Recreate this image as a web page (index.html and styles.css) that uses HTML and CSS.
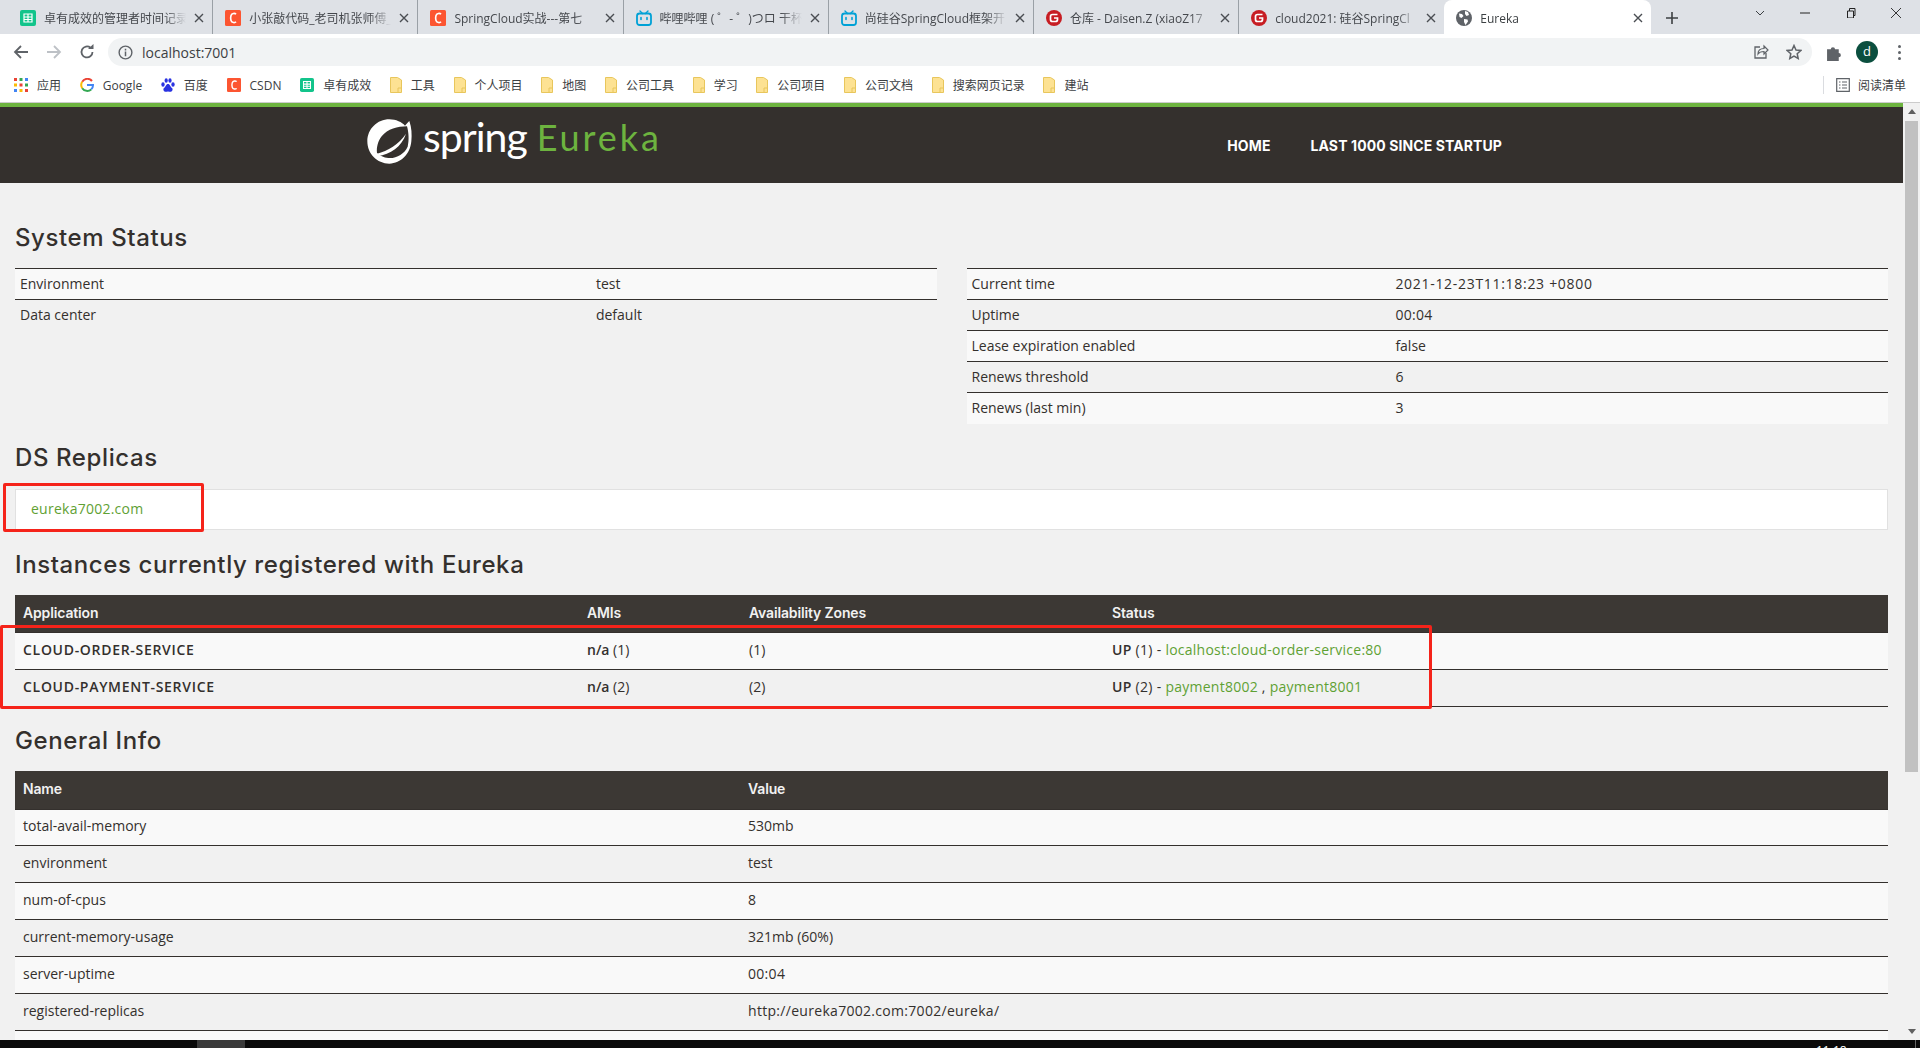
FILE: index.html
```html
<!DOCTYPE html>
<html lang="en">
<head>
  <meta charset="UTF-8" />
  <meta name="viewport" content="width=device-width, initial-scale=1" />
  <title>Eureka</title>
  <link rel="stylesheet" href="styles.css">
</head>
<body>
  <svg class="icon-defs" width="0" height="0">
    <symbol id="ic-sheet" viewBox="0 0 16 16">
      <rect width="16" height="16" rx="2" fill="#12c48b"/>
      <path d="M4 4h8v8H4zM4 7h8M4 9.500h8M8 4v8" fill="none" stroke="#fff" stroke-width="1.200"/>
    </symbol>
    <symbol id="ic-csdn" viewBox="0 0 16 16">
      <rect width="16" height="16" rx="1.500" fill="#fc5531"/>
      <path d="M11 4.200C10 3 6.800 2.900 6 5.500c-.5 1.700-.5 3.400 0 5 .8 2.600 4 2.500 5 1.300" fill="none" stroke="#fff" stroke-width="1.600"/>
    </symbol>
    <symbol id="ic-bili" viewBox="0 0 16 16">
      <path d="M4 1l2.500 2.500M12 1L9.500 3.500" stroke="#00a1d6" stroke-width="1.400" stroke-linecap="round"/>
      <rect x="1" y="3.500" width="14" height="11.500" rx="2.500" fill="none" stroke="#00a1d6" stroke-width="1.800"/>
      <path d="M5 7.500v2M11 7.500v2" stroke="#00a1d6" stroke-width="1.600" stroke-linecap="round"/>
    </symbol>
    <symbol id="ic-gitee" viewBox="0 0 16 16">
      <circle cx="8" cy="8" r="8" fill="#c71d23"/>
      <path d="M11.500 4.500H6.500a2 2 0 0 0-2 2v3a2 2 0 0 0 2 2h3a2 2 0 0 0 2-2V8H8" fill="none" stroke="#fff" stroke-width="1.700"/>
    </symbol>
    <symbol id="ic-globe" viewBox="0 0 16 16">
      <circle cx="8" cy="8" r="8" fill="#5f6368"/>
      <path d="M3 3.500l3 .5 1.500 2L5.500 8 3.500 7zM9 1l3 1 1 3-2.500 1L9 4zM8 9l3.500.5.5 2L9.500 15 8 12z" fill="#fff"/>
    </symbol>
    <symbol id="ic-folder" viewBox="0 0 12 16">
      <path d="M.5.500h7l4 2.500v12.500H.5z" fill="#fde293" stroke="#e8c65c"/>
      <path d="M8 15V11h3.500" fill="none" stroke="#e8c65c"/>
    </symbol>
    <symbol id="ic-close" viewBox="0 0 10 10">
      <path d="M1 1l8 8M9 1L1 9" stroke="#4a4d52" stroke-width="1.400" fill="none"/>
    </symbol>
  </svg>

  <!-- browser chrome -->
  <div class="tabstrip">
    <div class="tab"><svg class="favicon"><use href="#ic-sheet"/></svg><span class="tab-title">卓有成效的管理者时间记录</span><svg class="tab-close"><use href="#ic-close"/></svg></div>
    <div class="tab"><svg class="favicon"><use href="#ic-csdn"/></svg><span class="tab-title">小张敲代码_老司机张师傅_</span><svg class="tab-close"><use href="#ic-close"/></svg></div>
    <div class="tab"><svg class="favicon"><use href="#ic-csdn"/></svg><span class="tab-title">SpringCloud实战---第七</span><svg class="tab-close"><use href="#ic-close"/></svg></div>
    <div class="tab"><svg class="favicon"><use href="#ic-bili"/></svg><span class="tab-title">哔哩哔哩 ( ゜- ゜)つロ 干杯</span><svg class="tab-close"><use href="#ic-close"/></svg></div>
    <div class="tab"><svg class="favicon"><use href="#ic-bili"/></svg><span class="tab-title">尚硅谷SpringCloud框架开</span><svg class="tab-close"><use href="#ic-close"/></svg></div>
    <div class="tab"><svg class="favicon"><use href="#ic-gitee"/></svg><span class="tab-title">仓库 - Daisen.Z (xiaoZ17</span><svg class="tab-close"><use href="#ic-close"/></svg></div>
    <div class="tab tab-nosep"><svg class="favicon"><use href="#ic-gitee"/></svg><span class="tab-title">cloud2021: 硅谷SpringCl</span><svg class="tab-close"><use href="#ic-close"/></svg></div>
    <div class="tab tab-active"><svg class="favicon"><use href="#ic-globe"/></svg><span class="tab-title">Eureka</span><svg class="tab-close"><use href="#ic-close"/></svg></div>
    <svg class="new-tab" viewBox="0 0 12 12"><path d="M6 0v12M0 6h12" stroke="#3c4043" stroke-width="1.600"/></svg>
    <div class="win-controls">
      <svg viewBox="0 0 10 10"><path d="M1 3l4 4 4-4" fill="none" stroke="#3c4043"/></svg>
      <svg viewBox="0 0 10 10"><path d="M0 5h10" stroke="#222"/></svg>
      <svg viewBox="0 0 10 10"><path d="M1.500 3h6v7h-6zM3.500 3V.5h5.500v7H7.500" fill="none" stroke="#222"/></svg>
      <svg viewBox="0 0 10 10"><path d="M0 0l10 10M10 0L0 10" stroke="#222" stroke-width=".9"/></svg>
    </div>
  </div>

  <div class="toolbar">
    <svg class="tool-btn" viewBox="0 0 16 16"><path d="M15 8H2M8 2L2 8l6 6" fill="none" stroke="#5f6368" stroke-width="1.800"/></svg>
    <svg class="tool-btn" viewBox="0 0 16 16"><path d="M1 8h13M8 2l6 6-6 6" fill="none" stroke="#bdc1c6" stroke-width="1.800"/></svg>
    <svg class="tool-btn" viewBox="0 0 16 16"><path d="M13.500 8A5.500 5.500 0 1 1 11.500 3.700" fill="none" stroke="#5f6368" stroke-width="1.800"/><path d="M9 5h5.500V0z" fill="#5f6368"/></svg>
    <div class="omnibox">
      <svg class="omni-info" viewBox="0 0 16 16"><circle cx="8" cy="8" r="6.800" fill="none" stroke="#5f6368" stroke-width="1.500"/><path d="M8 7v5M8 4v1.800" stroke="#5f6368" stroke-width="1.600"/></svg>
      <span class="omni-url">localhost:7001</span>
      <svg class="omni-share" viewBox="0 0 16 16"><path d="M7 3H2v11h11V9" fill="none" stroke="#5f6368" stroke-width="1.300"/><path d="M5 10c0-4 3-5.500 6-5.500V2l4 4-4 4V7.500c-3 0-5 1-6 2.500z" fill="none" stroke="#5f6368" stroke-width="1.200"/></svg>
      <svg class="omni-star" viewBox="0 0 16 16"><path d="M8 1.500l2 4.500 4.800.5-3.600 3.200 1 4.800L8 12.100 3.800 14.500l1-4.800L1.200 6.500 6 6z" fill="none" stroke="#5f6368" stroke-width="1.500"/></svg>
    </div>
    <svg class="ext-btn" viewBox="0 0 16 16"><path d="M1 5h3.500a2 2 0 1 1 4 0H12v3.500a2 2 0 1 1 0 4V16H1z" fill="#5f6368"/></svg>
    <span class="avatar">d</span>
    <span class="menu-dots"><i></i><i></i><i></i></span>
  </div>

  <div class="bookmarks">
    <span class="bm bm-apps">
      <svg class="bm-icon" viewBox="0 0 14 14"><g>
        <rect width="3" height="3" fill="#ea4335"/><rect x="5.500" width="3" height="3" fill="#34a853"/><rect x="11" width="3" height="3" fill="#4285f4"/>
        <rect y="5.500" width="3" height="3" fill="#fbbc05"/><rect x="5.500" y="5.500" width="3" height="3" fill="#ea4335"/><rect x="11" y="5.500" width="3" height="3" fill="#34a853"/>
        <rect y="11" width="3" height="3" fill="#4285f4"/><rect x="5.500" y="11" width="3" height="3" fill="#fbbc05"/><rect x="11" y="11" width="3" height="3" fill="#ea4335"/>
      </g></svg>应用</span>
    <span class="bm">
      <svg class="bm-icon" viewBox="0 0 14 14"><path d="M12 3A6 6 0 0 0 2.200 3.800" fill="none" stroke="#ea4335" stroke-width="2"/><path d="M2.200 3.800a6 6 0 0 0 0 6.400" fill="none" stroke="#fbbc05" stroke-width="2"/><path d="M2.200 10.200a6 6 0 0 0 9 1.200" fill="none" stroke="#34a853" stroke-width="2"/><path d="M11.200 11.400A6 6 0 0 0 13 7H7" fill="none" stroke="#4285f4" stroke-width="2"/></svg>Google</span>
    <span class="bm">
      <svg class="bm-icon" viewBox="0 0 14 14"><g fill="#2932e1"><ellipse cx="2" cy="6.500" rx="1.700" ry="2.300"/><ellipse cx="5.200" cy="2.500" rx="1.600" ry="2.300"/><ellipse cx="9" cy="2.500" rx="1.600" ry="2.300"/><ellipse cx="12" cy="6.500" rx="1.700" ry="2.300"/><path d="M7 6c-2 0-2 2.500-4 4-1.500 1.500 0 4 2 3.800 1 0 1.500-.3 2-.3s1 .3 2 .3c2 .2 3.500-2.300 2-3.800C9 8.500 9 6 7 6z"/></g></svg>百度</span>
    <span class="bm"><svg class="bm-icon"><use href="#ic-csdn"/></svg>CSDN</span>
    <span class="bm"><svg class="bm-icon"><use href="#ic-sheet"/></svg>卓有成效</span>
    <span class="bm"><svg class="bm-folder"><use href="#ic-folder"/></svg>工具</span>
    <span class="bm"><svg class="bm-folder"><use href="#ic-folder"/></svg>个人项目</span>
    <span class="bm"><svg class="bm-folder"><use href="#ic-folder"/></svg>地图</span>
    <span class="bm"><svg class="bm-folder"><use href="#ic-folder"/></svg>公司工具</span>
    <span class="bm"><svg class="bm-folder"><use href="#ic-folder"/></svg>学习</span>
    <span class="bm"><svg class="bm-folder"><use href="#ic-folder"/></svg>公司项目</span>
    <span class="bm"><svg class="bm-folder"><use href="#ic-folder"/></svg>公司文档</span>
    <span class="bm"><svg class="bm-folder"><use href="#ic-folder"/></svg>搜索网页记录</span>
    <span class="bm"><svg class="bm-folder"><use href="#ic-folder"/></svg>建站</span>
    <span class="reading-list">
      <svg class="bm-icon" viewBox="0 0 14 14"><path d="M.7.700h12.600v12.600H.7zM3 4h1.500M6 4h5M3 7h1.500M6 7h5M3 10h1.500M6 10h5" fill="none" stroke="#5f6368" stroke-width="1.200"/></svg>阅读清单</span>
  </div>

  <!-- page -->
  <div class="viewport">
    <main class="page">
      <nav class="navbar">
        <div class="brand">
          <svg class="spring-logo" viewBox="0 0 135 135">
            <path d="M127 6c7 20 8 40 6 61-3 38-31 66-66 67C30 134 1 104 1 67 1 30 31 1 67 1c20 0 38 9 47 19 4-4 9-10 13-14z" fill="#fff"/>
            <path d="M120 22c-28 0-58 8-76 30-11 14-16 33-14 50 8 8 20 14 34 15 24 2 48-12 58-34 5-20 3-43-2-61z" fill="#34302d"/>
            <path d="M117 44C96 76 62 96 30 104l2 7c38-4 72-28 85-67z" fill="#fff"/>
          </svg>
          <span class="brand-spring">spring</span>
          <span class="brand-eureka">Eureka</span>
        </div>
        <ul class="nav-links">
          <li>Home</li>
          <li>Last 1000 since startup</li>
        </ul>
      </nav>

      <section class="section section-first">
        <h2>System Status</h2>
        <div class="status-grid">
          <table class="kv-table kv-left">
            <tr><td>Environment</td><td>test</td></tr>
            <tr><td>Data center</td><td>default</td></tr>
          </table>
          <table class="kv-table kv-right">
            <tr><td>Current time</td><td class="num-wide">2021-12-23T11:18:23 +0800</td></tr>
            <tr><td>Uptime</td><td class="num">00:04</td></tr>
            <tr><td>Lease expiration enabled</td><td>false</td></tr>
            <tr><td>Renews threshold</td><td>6</td></tr>
            <tr><td>Renews (last min)</td><td>3</td></tr>
          </table>
        </div>
      </section>

      <section class="section section-replicas">
        <h2>DS Replicas</h2>
        <div class="replicas"><a href="#">eureka7002.com</a></div>
      </section>

      <section class="section section-instances">
        <h2>Instances currently registered with Eureka</h2>
        <table class="data-table instances">
          <thead>
            <tr><th>Application</th><th>AMIs</th><th>Availability Zones</th><th>Status</th></tr>
          </thead>
          <tbody>
            <tr><td><b class="app-name">CLOUD-ORDER-SERVICE</b></td><td><b>n/a</b> (1)</td><td>(1)</td><td class="status-cell"><b>UP</b> (1) - <a href="#">localhost:cloud-order-service:80</a></td></tr>
            <tr><td><b class="app-name">CLOUD-PAYMENT-SERVICE</b></td><td><b>n/a</b> (2)</td><td>(2)</td><td class="status-cell"><b>UP</b> (2) - <a href="#">payment8002</a> , <a href="#">payment8001</a></td></tr>
          </tbody>
        </table>
      </section>

      <section class="section">
        <h2>General Info</h2>
        <table class="data-table general">
          <thead>
            <tr><th>Name</th><th>Value</th></tr>
          </thead>
          <tbody>
            <tr><td>total-avail-memory</td><td>530mb</td></tr>
            <tr><td>environment</td><td>test</td></tr>
            <tr><td>num-of-cpus</td><td>8</td></tr>
            <tr><td>current-memory-usage</td><td>321mb (60%)</td></tr>
            <tr><td>server-uptime</td><td class="num">00:04</td></tr>
            <tr><td>registered-replicas</td><td class="num">http://eureka7002.com:7002/eureka/</td></tr>
            <tr><td>unavailable-replicas</td><td></td></tr>
          </tbody>
        </table>
      </section>

      <!-- red marks drawn on top of the screenshot -->
      <div class="mark mark-replica"></div>
      <div class="mark mark-instances"></div>
    </main>
    <div class="scrollbar">
      <span class="arrow-up"></span>
      <span class="thumb"></span>
      <span class="arrow-down"></span>
    </div>
  </div>

  <div class="taskbar">
    <span class="task-active"></span>
    <span class="task-clock">11:18</span>
    <span class="task-edge"></span>
  </div>
</body>
</html>
```

FILE: styles.css
```css
* {
  box-sizing: border-box;
}

html, body {
  height: 100%;
}

body {
  margin: 0;
  height: 1048px;
  overflow: hidden;
  display: flex;
  flex-direction: column;
  background: #f1f1f1;
  color: #34302d;
  font-family: "Open Sans", "Noto Sans CJK SC", sans-serif;
}

.icon-defs {
  position: absolute;
}

/* tabs */
.tabstrip {
  height: 34px;
  flex: none;
  display: flex;
  padding-left: 8px;
  background: #dee1e6;
  font-size: 12px;
}

.tab {
  width: 205.2px;
  flex: none;
  display: flex;
  align-items: center;
  padding: 2px 8px 0 12px;
  gap: 8px;
  border-right: 1px solid #9aa0a6;
  color: #45484d;
}

.tab-nosep {
  border-right: none;
}

.tab-active {
  width: 207px;
  background: #fff;
  border-right: none;
  border-radius: 8px 8px 0 0;
  color: #3c4043;
}

.favicon {
  width: 16px;
  height: 16px;
  flex: none;
}

.tab-title {
  flex: 1;
  min-width: 0;
  overflow: hidden;
  white-space: nowrap;
  -webkit-mask-image: linear-gradient(to right, #000 85%, transparent);
  mask-image: linear-gradient(to right, #000 85%, transparent);
}

.tab-close {
  width: 10px;
  height: 10px;
  flex: none;
}

.new-tab {
  width: 12px;
  height: 12px;
  margin: 12px 0 0 15px;
  flex: none;
}

.win-controls {
  margin-left: auto;
  width: 185px;
  padding: 8px 19px 0 20px;
  display: flex;
  justify-content: space-between;
  flex: none;
}

.win-controls svg {
  width: 10px;
  height: 10px;
}

/* address bar */
.toolbar {
  height: 34px;
  flex: none;
  display: flex;
  align-items: center;
  padding: 2px 0 0 13px;
  background: #fff;
}

.tool-btn {
  width: 16px;
  height: 16px;
  margin-right: 17px;
  flex: none;
}

.omnibox {
  width: 1704px;
  height: 28px;
  margin-left: -4px;
  display: flex;
  align-items: center;
  padding: 0 10px 0 10px;
  border-radius: 14px;
  background: #f1f3f4;
}

.omni-info {
  width: 15px;
  height: 15px;
  margin-right: 9px;
}

.omni-url {
  font-size: 14px;
  color: #3c4043;
  flex: 1;
}

.omni-share, .omni-star {
  width: 16px;
  height: 16px;
  margin-left: 17px;
}

.ext-btn {
  width: 17px;
  height: 17px;
  margin-left: 14px;
}

.avatar {
  width: 22px;
  height: 22px;
  margin-left: 13px;
  border-radius: 50%;
  background: #0b4f3f;
  color: #fff;
  font-size: 13px;
  line-height: 21px;
  text-align: center;
}

.menu-dots {
  display: flex;
  flex-direction: column;
  gap: 3px;
  margin-left: 20px;
}

.menu-dots i {
  width: 3px;
  height: 3px;
  border-radius: 50%;
  background: #5f6368;
}

/* bookmarks */
.bookmarks {
  height: 35px;
  flex: none;
  display: flex;
  align-items: center;
  padding: 0 14px;
  background: #fff;
  border-bottom: 1px solid #ccc;
  font-size: 12px;
  color: #3c4043;
  gap: 18.7px;
}

.bm {
  display: flex;
  align-items: center;
  gap: 9px;
}

.bm-icon {
  width: 14px;
  height: 14px;
  flex: none;
}

.bm-folder {
  width: 12px;
  height: 16px;
  flex: none;
}

.reading-list {
  margin-left: auto;
  display: flex;
  align-items: center;
  gap: 8px;
  padding-left: 12px;
  border-left: 1px solid #dadce0;
  height: 18px;
}

/* page frame */
.viewport {
  flex: 1;
  min-height: 0;
  display: flex;
}

.page {
  position: relative;
  flex: 1;
  min-width: 0;
  overflow: hidden;
  background: #f1f1f1;
  font-size: 14px;
}

.scrollbar {
  width: 17px;
  flex: none;
  display: flex;
  flex-direction: column;
  align-items: center;
  padding-top: 6px;
  background: #f1f1f1;
}

.thumb {
  width: 13px;
  height: 651px;
  margin-top: 7px;
  background: #c1c1c1;
}

.arrow-up {
  border: 4px solid transparent;
  border-top: none;
  border-bottom: 5px solid #606060;
}

.arrow-down {
  margin-top: auto;
  margin-bottom: 6px;
  border: 4px solid transparent;
  border-bottom: none;
  border-top: 5px solid #606060;
}

/* eureka navbar */
.navbar {
  height: 80px;
  display: flex;
  align-items: center;
  padding: 0 401px 0 367px;
  background: #34302d;
  border-top: 4px solid #6db33f;
}

.brand {
  display: flex;
  align-items: center;
  margin-bottom: 8px;
}

.spring-logo {
  width: 45px;
  height: 45px;
  flex: none;
}

.brand-spring {
  margin: 0 0 9px 11px;
  font-family: "Lato", sans-serif;
  font-size: 41px;
  color: #fff;
  letter-spacing: -1px;
  line-height: 1;
}

.brand-eureka {
  margin: 0 0 9px 10px;
  font-family: "Lato", sans-serif;
  font-size: 36px;
  color: #6db33f;
  letter-spacing: 2.9px;
  line-height: 1;
}

.nav-links {
  display: flex;
  gap: 40px;
  list-style: none;
  margin: 0 0 0 auto;
  padding: 0;
  font-family: "Inter", sans-serif;
  font-size: 14px;
  font-weight: 700;
  letter-spacing: .1px;
  color: #fff;
  text-transform: uppercase;
}

/* sections */
.section {
  padding: 0 15px;
  margin-top: 21px;
}

.section-first {
  margin-top: 42px;
}

.section-instances {
  margin-top: 22px;
}

h2 {
  margin: 0 0 17px;
  font-family: "Inter", sans-serif;
  font-size: 24px;
  font-weight: 500;
  letter-spacing: .6px;
  line-height: 26px;
  color: #34302d;
}

.section-replicas h2 {
  margin-bottom: 18px;
}

a {
  color: #5fa134;
  text-decoration: none;
  letter-spacing: .25px;
}

.status-grid {
  display: grid;
  grid-template-columns: 1fr 1fr;
  gap: 30px;
  align-items: start;
}

table {
  width: 100%;
  border-collapse: collapse;
  table-layout: fixed;
}

.kv-table {
  border-top: 1px solid #34302d;
}

.kv-table td {
  height: 31px;
  padding: 0 5px 2px;
  border-top: 1px solid #34302d;
}

.kv-table tr:nth-child(odd) {
  background: #f9f9f9;
}

.kv-left td:first-child {
  width: 62.5%;
}

.kv-right td:first-child {
  width: 46%;
}

.num {
  letter-spacing: .3px;
}

.num-wide {
  letter-spacing: .7px;
}

.replicas {
  height: 41px;
  display: flex;
  align-items: center;
  padding: 0 0 2px 15px;
  background: #fff;
  border: 1px solid #e1e1e1;
}

.data-table th {
  height: 38px;
  padding: 0 8px 2px;
  text-align: left;
  font-family: "Inter", sans-serif;
  font-weight: 600;
  letter-spacing: -.15px;
  color: #f1f1f1;
  background: #3c3834;
  border-bottom: 1px solid #34302d;
}

.data-table td {
  height: 37px;
  padding: 0 8px 3px;
  border-bottom: 1px solid #34302d;
}

.data-table tbody tr:nth-child(odd) {
  background: #f9f9f9;
}

.data-table b {
  font-weight: 600;
}

.data-table .app-name {
  letter-spacing: .7px;
}

.status-cell {
  letter-spacing: .3px;
}

.instances th:nth-child(1) {
  width: 564px;
}

.instances th:nth-child(2) {
  width: 162px;
}

.instances th:nth-child(3) {
  width: 363px;
}

.general th:nth-child(1) {
  width: 725px;
}

.general tbody tr:first-child td {
  height: 36px;
  padding-bottom: 4px;
}

.mark {
  position: absolute;
  border: 3px solid #f5231a;
  border-radius: 2px;
}

.mark-replica {
  left: 3px;
  top: 380px;
  width: 201px;
  height: 49px;
}

.mark-instances {
  left: 0;
  top: 522px;
  width: 1432px;
  height: 84px;
}

/* taskbar */
.taskbar {
  height: 8px;
  flex: none;
  position: relative;
  overflow: hidden;
  background: #0a0a0a;
}

.task-active {
  position: absolute;
  left: 197px;
  top: 0;
  width: 48px;
  height: 8px;
  background: #3a3a3a;
}

.task-clock {
  position: absolute;
  left: 1816px;
  top: 3px;
  font-size: 12px;
  line-height: 16px;
  color: #fff;
}

.task-edge {
  position: absolute;
  right: 4px;
  top: 0;
  width: 1px;
  height: 8px;
  background: #666;
}
```
